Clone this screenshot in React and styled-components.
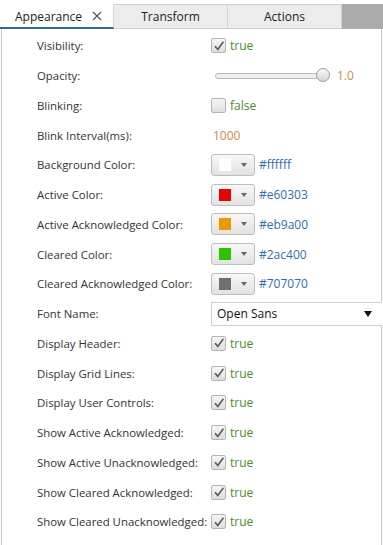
import React from 'react'
import styled, { createGlobalStyle } from 'styled-components'

const Global = createGlobalStyle`
  body {
    margin: 0;
    background: #fff;
    font-family: "Open Sans", "Noto Sans", sans-serif;
    color: #333;
  }
`

const Page = styled.div`
  width: 383px;
  height: 545px;
  overflow: hidden;
  background: #fff;
`

const TabBar = styled.div`
  display: flex;
  padding-top: 4px;
  height: 25px;
`

const Tab = styled.div`
  width: ${p => p.w}px;
  box-sizing: border-box;
  display: flex;
  align-items: center;
  justify-content: ${p => (p.active ? 'flex-start' : 'center')};
  padding-left: ${p => (p.active ? '15px' : '0')};
  font-size: 12px;
  color: #222;
  background: ${p => (p.active ? '#fff' : '#ececec')};
  border-top: 1px solid ${p => (p.active ? '#fff' : '#d2d2d2')};
  border-right: 1px solid #d2d2d2;
  border-bottom: ${p => (p.active ? '2px solid #2b6a9c' : '1px solid #d2d2d2')};
`

const Close = styled.span`
  margin-left: 10px;
  display: flex;
`

const Filler = styled.div`
  flex: 1;
  background: #ababab;
`

const Panel = styled.div`
  margin: 0 1px;
  height: 520px;
  border-left: 1px solid #cacaca;
  border-right: 1px solid #cacaca;
  padding-top: 2px;
  box-sizing: border-box;
`

const Row = styled.div`
  display: grid;
  grid-template-columns: 174px 1fr;
  align-items: center;
  height: 29.75px;
  padding-left: 35px;
`

const Label = styled.div`
  font-size: 11.4px;
  color: #333;
  white-space: nowrap;
`

const Value = styled.div`
  display: flex;
  align-items: center;
  gap: 4px;
  font-size: 12px;
`

const Box = styled.div`
  width: 15px;
  height: 15px;
  box-sizing: border-box;
  border: 1px solid #b4b4b4;
  border-radius: 2px;
  background: linear-gradient(#f6f6f6, #dedede);
  display: flex;
  align-items: center;
  justify-content: center;
`

const Bool = styled.span`
  color: #4a8a2c;
`

const Num = styled.span`
  color: #d08a48;
  margin-left: ${p => p.indent || 0}px;
`

const Hex = styled.span`
  color: #2f6ea8;
`

const Track = styled.div`
  position: relative;
  width: 108px;
  height: 4px;
  margin-left: 4px;
  border: 1px solid #b8b8b8;
  border-radius: 3px;
  background: #f0f0f0;
`

const Thumb = styled.div`
  position: absolute;
  right: -6px;
  top: -6px;
  width: 14px;
  height: 14px;
  box-sizing: border-box;
  border-radius: 50%;
  border: 1px solid #9a9a9a;
  background: linear-gradient(#fafafa, #d6d6d6);
`

const SwatchButton = styled.div`
  width: 44px;
  height: 22px;
  box-sizing: border-box;
  border: 1px solid #bdbdbd;
  border-radius: 3px;
  background: linear-gradient(#f8f8f8, #e2e2e2);
  display: flex;
  align-items: center;
  padding-left: 7px;
  gap: 10px;
`

const Swatch = styled.div`
  width: 12px;
  height: 12px;
  background: ${p => p.color};
`

const Caret = styled.div`
  width: 0;
  height: 0;
  border-left: 3.5px solid transparent;
  border-right: 3.5px solid transparent;
  border-top: 4px solid #666;
`

const Combo = styled.div`
  width: 171px;
  height: 24px;
  box-sizing: border-box;
  border: 1px solid #cfcfcf;
  border-right: none;
  background: #fff;
  display: flex;
  align-items: center;
  justify-content: space-between;
  padding: 0 10px 0 5px;
  font-size: 12px;
  color: #111;
`

const ComboCaret = styled.div`
  width: 0;
  height: 0;
  border-left: 4px solid transparent;
  border-right: 4px solid transparent;
  border-top: 6px solid #111;
`

function Check({ on }) {
  return (
    <Value>
      <Box>
        {on && (
          <svg width="12" height="12" viewBox="0 0 12 12">
            <path d="M2 6.2 L4.8 9.4 L10.4 1.8" fill="none" stroke="#5a5a5a" strokeWidth="1.6" />
          </svg>
        )}
      </Box>
      <Bool>{on ? 'true' : 'false'}</Bool>
    </Value>
  )
}

function ColorValue({ color }) {
  return (
    <Value>
      <SwatchButton>
        <Swatch color={color} />
        <Caret />
      </SwatchButton>
      <Hex>{color}</Hex>
    </Value>
  )
}

const colors = [
  ['Background Color:', '#ffffff'],
  ['Active Color:', '#e60303'],
  ['Active Acknowledged Color:', '#eb9a00'],
  ['Cleared Color:', '#2ac400'],
  ['Cleared Acknowledged Color:', '#707070'],
]

const flags = [
  'Display Header:',
  'Display Grid Lines:',
  'Display User Controls:',
  'Show Active Acknowledged:',
  'Show Active Unacknowledged:',
  'Show Cleared Acknowledged:',
  'Show Cleared Unacknowledged:',
]

export default function App() {
  return (
    <Page>
      <Global />
      <TabBar>
        <Tab w={114} active>
          Appearance
          <Close>
            <svg width="10" height="10" viewBox="0 0 10 10">
              <path d="M1 1 L9 9 M9 1 L1 9" stroke="#555" strokeWidth="1.2" />
            </svg>
          </Close>
        </Tab>
        <Tab w={114}>Transform</Tab>
        <Tab w={114}>Actions</Tab>
        <Filler />
      </TabBar>
      <Panel>
        <Row>
          <Label>Visibility:</Label>
          <Check on />
        </Row>
        <Row>
          <Label>Opacity:</Label>
          <Value>
            <Track>
              <Thumb />
            </Track>
            <Num indent={8}>1.0</Num>
          </Value>
        </Row>
        <Row>
          <Label>Blinking:</Label>
          <Check on={false} />
        </Row>
        <Row>
          <Label>Blink Interval(ms):</Label>
          <Value>
            <Num indent={2}>1000</Num>
          </Value>
        </Row>
        {colors.map(([label, c]) => (
          <Row key={label}>
            <Label>{label}</Label>
            <ColorValue color={c} />
          </Row>
        ))}
        <Row>
          <Label>Font Name:</Label>
          <Value>
            <Combo>
              Open Sans
              <ComboCaret />
            </Combo>
          </Value>
        </Row>
        {flags.map(f => (
          <Row key={f}>
            <Label>{f}</Label>
            <Check on />
          </Row>
        ))}
      </Panel>
    </Page>
  )
}
